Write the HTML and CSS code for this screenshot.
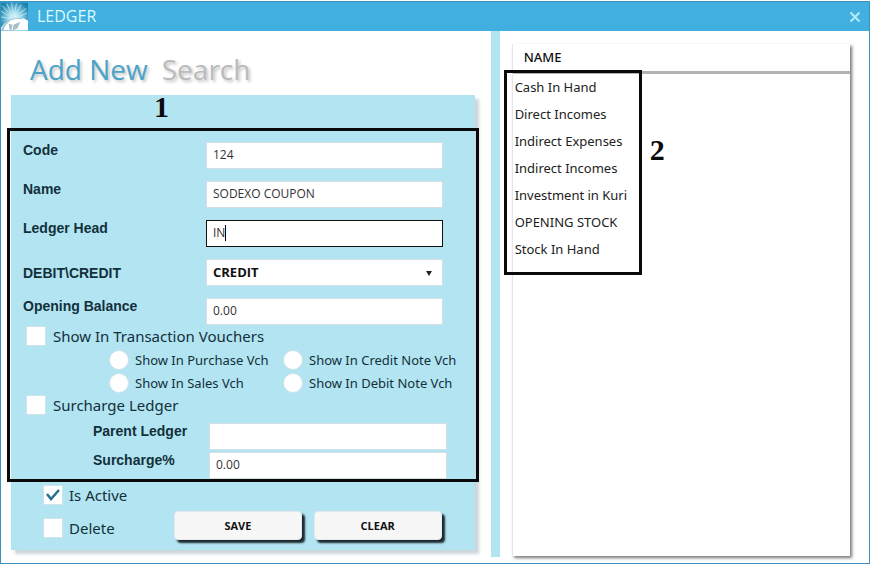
FILE: index.html
```html
<!DOCTYPE html>
<html lang="en">
<head>
    <meta charset="UTF-8">
    <meta name="viewport" content="width=device-width, initial-scale=1.0">
    <title>Ledger</title>
    <link rel="stylesheet" href="styles.css">
</head>
<body>
    <div class="window">
        <header class="titlebar">
            <svg class="logo" viewBox="0 0 28 29" aria-hidden="true">
                <defs>
                    <radialGradient id="glow" cx="0.5" cy="0.55" r="0.6">
                        <stop offset="0" stop-color="#fff"/>
                        <stop offset="0.4" stop-color="#9ad6ea"/>
                        <stop offset="1" stop-color="#1b83ad"/>
                    </radialGradient>
                </defs>
                <rect width="28" height="29" fill="url(#glow)"/>
                <g stroke="#c4ebf6" stroke-width="0.8">
                    <path d="M13 17L1 3M13 17L6 1M13 17L11 0M13 17L16 1M13 17L21 2M13 17L26 6M13 17L27 11M13 17L0 9M13 17L0 15"/>
                </g>
                <path d="M0 29V26C5 19 12 16 19 16C23 16 26 17 28 19V29Z" fill="#fff"/>
                <path d="M0 29C1 24 5 20 10 19C6 22 3 25 3 29Z" fill="#a5c9d6"/>
                <path d="M5 21C9 17 16 16 22 17" fill="none" stroke="#8cc3d6" stroke-width="1"/>
                <path d="M8 22L12 23L11 28L9 29ZM13 23L20 20L17 27L12 29Z" fill="#a9bfc8"/>
            </svg>
            <h1>LEDGER</h1>
            <button class="close" type="button" aria-label="Close">
                <svg viewBox="0 0 12 12" aria-hidden="true"><path d="M1.500 1.500L10.500 10.500M10.500 1.500L1.500 10.500"/></svg>
            </button>
        </header>

        <main class="content">
            <section class="editor">
                <nav class="tabs">
                    <a class="active" href="#add">Add New</a>
                    <a href="#search">Search</a>
                </nav>
                <form class="panel">
                    <span class="note note-one">1</span>
                    <div class="details">
                        <div class="fields">
                            <label for="code">Code</label>
                            <input type="text" id="code" value="124">
                            <label for="name">Name</label>
                            <input type="text" id="name" value="SODEXO COUPON">
                            <label for="head">Ledger Head</label>
                            <div class="control">
                                <input class="current" type="text" id="head" value="IN">
                                <span class="caret"></span>
                            </div>
                            <label class="middle" for="type">DEBIT\CREDIT</label>
                            <div class="control">
                                <select id="type">
                                    <option>CREDIT</option>
                                    <option>DEBIT</option>
                                </select>
                                <span class="arrow"></span>
                            </div>
                            <label for="opening">Opening Balance</label>
                            <input type="text" id="opening" value="0.00">
                        </div>
                        <label class="check"><input type="checkbox">Show In Transaction Vouchers</label>
                        <div class="vouchers">
                            <label class="radio"><input type="radio" name="voucher">Show In Purchase Vch</label>
                            <label class="radio"><input type="radio" name="voucher">Show In Credit Note Vch</label>
                            <label class="radio"><input type="radio" name="voucher">Show In Sales Vch</label>
                            <label class="radio"><input type="radio" name="voucher">Show In Debit Note Vch</label>
                        </div>
                        <label class="check"><input type="checkbox">Surcharge Ledger</label>
                        <div class="fields surcharge">
                            <label for="parent">Parent Ledger</label>
                            <input type="text" id="parent">
                            <label for="percent">Surcharge%</label>
                            <input type="text" id="percent" value="0.00">
                        </div>
                        <span class="frame"></span>
                    </div>
                    <div class="footer">
                        <div class="flags">
                            <label class="check"><input type="checkbox" checked>Is Active</label>
                            <label class="check"><input type="checkbox">Delete</label>
                        </div>
                        <button class="action" type="button">SAVE</button>
                        <button class="action" type="button">CLEAR</button>
                    </div>
                </form>
            </section>

            <div class="splitter"></div>

            <section class="list">
                <table>
                    <thead>
                        <tr><th>NAME</th></tr>
                    </thead>
                    <tbody>
                        <tr><td>Cash In Hand</td></tr>
                        <tr><td>Direct Incomes</td></tr>
                        <tr><td>Indirect Expenses</td></tr>
                        <tr><td>Indirect Incomes</td></tr>
                        <tr><td>Investment in Kuri</td></tr>
                        <tr><td>OPENING STOCK</td></tr>
                        <tr><td>Stock In Hand</td></tr>
                    </tbody>
                </table>
                <span class="frame"></span>
                <span class="note note-two">2</span>
            </section>
        </main>
    </div>
</body>
</html>
```

FILE: styles.css
```css
* {
    box-sizing: border-box;
}
body {
    margin: 1px 8px 0 0;
    background: #fff;
    color: #12303a;
    font-family: "Noto Sans", "Open Sans", sans-serif;
    font-size: 13px;
}
.window {
    border: 1px solid #3b93b8;
}

/* title bar */
.titlebar {
    display: flex;
    align-items: center;
    height: 29px;
    background: #41afe0;
}
.logo {
    width: 27px;
    height: 29px;
}
h1 {
    flex: 1;
    margin: 0 0 2px 9px;
    color: #d8fbff;
    font-family: "Open Sans", sans-serif;
    font-size: 16px;
    font-weight: 400;
}
.close {
    width: 28px;
    height: 28px;
    padding: 8px;
    border: none;
    background: none;
}
.close svg {
    display: block;
    width: 12px;
    height: 12px;
    stroke: #b5ecfa;
    stroke-width: 2;
}

/* layout */
.content {
    display: grid;
    grid-template-columns: 57fr 9px 43fr;
    padding-bottom: 6px;
}
.splitter {
    background: #b3e4f2;
}
.editor {
    padding: 18px 16px 7px 10px;
}
.tabs {
    display: flex;
    gap: 14px;
    height: 46px;
    padding-left: 19px;
    font-family: "Open Sans", sans-serif;
    font-size: 28px;
    line-height: 40px;
}
.tabs a {
    color: #b9bcbd;
    text-decoration: none;
    text-shadow: 2px 2px 3px #c4c4c4;
}
.tabs .active {
    color: #4ba3c8;
}
.panel {
    position: relative;
    padding: 33px 0 10px;
    background: #b3e4f2;
    box-shadow: 4px 4px 3px #ccd6d9;
}
.details {
    position: relative;
    padding: 14px 28px 3px 12px;
}
.frame {
    position: absolute;
    border: 3px solid #0a0a0a;
    pointer-events: none;
}
.details .frame {
    inset: 0 -4px;
}

/* form fields */
.fields {
    display: grid;
    grid-template-columns: 183px 1fr;
    row-gap: 12px;
    padding-right: 4px;
}
.fields label {
    font: bold 14px/16px "Liberation Sans", Arial, sans-serif;
}
.fields .middle {
    align-self: center;
}
.fields input,
.fields select {
    display: block;
    width: 100%;
    height: 27px;
    padding: 0 6px 2px;
    border: 1px solid #d3dfe4;
    border-radius: 0;
    outline: none;
    background: #fff;
    color: #333;
    font-family: "Open Sans", sans-serif;
    font-size: 12px;
}
.fields select {
    appearance: none;
    color: #111;
    font-size: 13px;
    font-weight: 700;
}
.fields .current {
    border-color: #111;
}
.control {
    position: relative;
}
.caret {
    position: absolute;
    top: 5px;
    left: 19px;
    width: 1px;
    height: 16px;
    background: #000;
}
.arrow {
    position: absolute;
    top: 12px;
    right: 11px;
    border: 3px solid transparent;
    border-top: 5px solid #222;
    border-bottom: none;
    pointer-events: none;
}

/* check boxes and radios */
.check,
.radio {
    display: flex;
    align-items: center;
}
.check {
    gap: 7px;
    height: 21px;
    padding-left: 3px;
    font-size: 15px;
}
.check input,
.radio input {
    appearance: none;
    flex: none;
    width: 20px;
    height: 20px;
    margin: 0;
    border: 1px solid #cfe3ea;
    background: #fff;
}
.check input:checked {
    background: #fff url("data:image/svg+xml,%3Csvg xmlns='http://www.w3.org/2000/svg' viewBox='0 0 18 18'%3E%3Cpath d='M3 8L7 13L15 4' fill='none' stroke='%2326708f' stroke-width='2.5'/%3E%3C/svg%3E");
}
.vouchers {
    display: grid;
    grid-template-columns: 174px auto;
    justify-content: start;
    padding: 2px 0 0 86px;
    margin-right: -20px;
}
.radio {
    gap: 6px;
    height: 23px;
    white-space: nowrap;
}
.radio input {
    border-radius: 50%;
}
.surcharge {
    grid-template-columns: 116px 1fr;
    row-gap: 2px;
    padding: 8px 0 0 70px;
}

/* footer */
.footer {
    display: flex;
    align-items: flex-end;
    gap: 12px;
    padding: 2px 33px 0 29px;
}
.flags {
    display: flex;
    flex-direction: column;
    gap: 12px;
    width: 122px;
    padding-bottom: 2px;
}
.flags .check {
    gap: 6px;
}
.action {
    flex: 1;
    height: 29px;
    border: 1px solid #e4eaec;
    border-radius: 4px;
    background: #f7f7f8;
    box-shadow: 3px 3px 2px #1c2a2f;
    color: #111;
    font: bold 11px "Open Sans", sans-serif;
}

/* ledger list */
.list {
    position: relative;
    margin: 13px 19px 1px 12px;
    border-left: 1px solid #e4e4ec;
    background: #fff;
    box-shadow: 2px 2px 3px #777;
}
table {
    width: 100%;
    border-collapse: collapse;
    color: #222;
}
th {
    height: 28px;
    padding: 0 11px;
    border-bottom: 3px solid #b3b3b3;
    color: #111;
    font-weight: 500;
    text-align: left;
}
td {
    height: 27px;
    padding: 2px 2px 0;
}
.list .frame {
    top: 26px;
    left: -9px;
    width: 138px;
    height: 205px;
}

/* numbered notes */
.note {
    position: absolute;
    color: #0a0a0a;
    font: bold 30px/30px "Liberation Serif", "Times New Roman", serif;
}
.note-one {
    top: -3px;
    left: 143px;
}
.note-two {
    top: 91px;
    left: 137px;
}
```
